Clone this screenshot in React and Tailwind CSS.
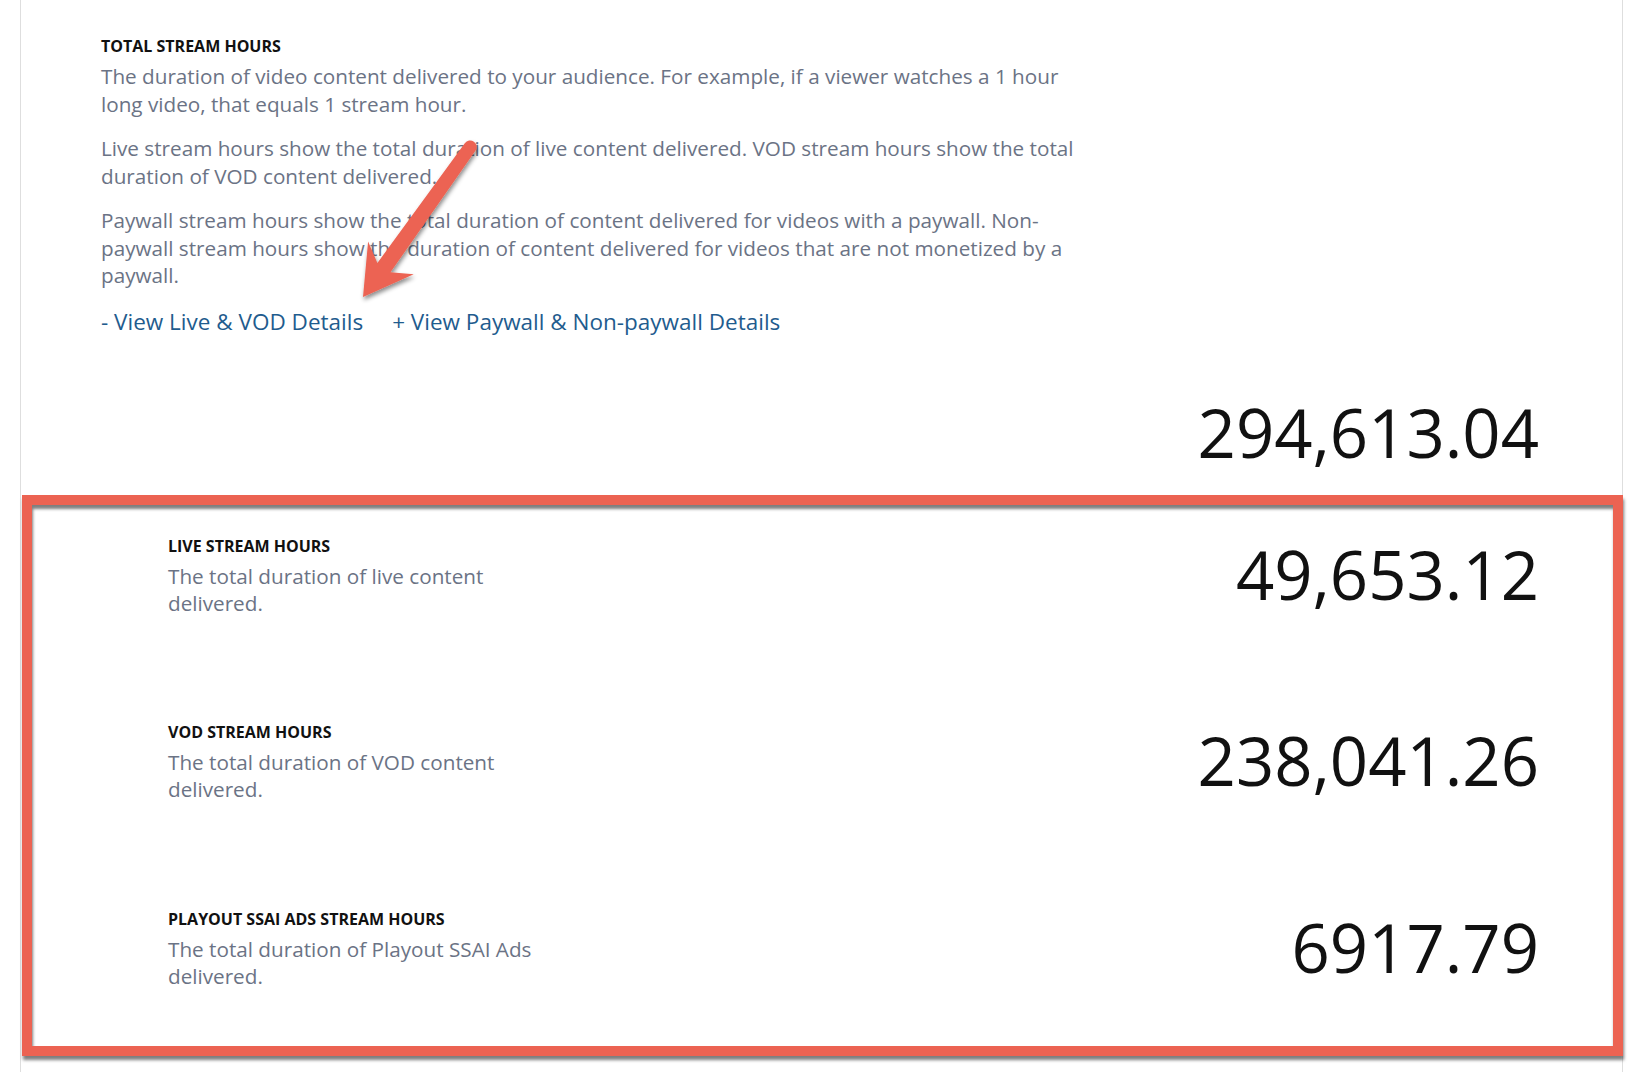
const rows = [
  {
    title: "Live Stream Hours",
    text: "The total duration of live content delivered.",
    value: "49,653.12",
  },
  {
    title: "VOD Stream Hours",
    text: "The total duration of VOD content delivered.",
    value: "238,041.26",
  },
  {
    title: "Playout SSAI Ads Stream Hours",
    text: "The total duration of Playout SSAI Ads delivered.",
    value: "6917.79",
  },
];

const MetricRow = ({ title, text, value }) => {
  return (
    <div className="flex items-start justify-between pl-[136px] pr-[74px]">
      <div className="w-[380px]">
        <h3 className="text-[16px] font-bold uppercase leading-[20px] text-[#111]">{title}</h3>
        <p className="mt-[7px] text-[20.7px] leading-[27.3px] text-[#6b7385]">{text}</p>
      </div>
      <div className="mt-[5px] text-[67px] leading-none text-[#111]">{value}</div>
    </div>
  );
};

const Arrow = () => {
  return (
    <svg
      className="pointer-events-none absolute left-[-21px] top-0"
      width="600"
      height="360"
      viewBox="0 0 600 360"
    >
      <defs>
        <filter id="arrow-shadow" x="-30%" y="-30%" width="160%" height="160%">
          <feDropShadow dx="1" dy="3" stdDeviation="2" floodColor="#000" floodOpacity="0.45" />
        </filter>
      </defs>
      <path
        d="M 363 297 L 413.7 274.2 L 390.5 272.3 L 475.4 150.8 A 6.5 6.5 0 0 0 464.8 143.2 L 377.4 263 L 368.1 241.6 Z"
        fill="#ec6352"
        filter="url(#arrow-shadow)"
      />
    </svg>
  );
};

export default function App() {
  return (
    <div className="min-h-screen bg-white pl-[20px] font-['Open_Sans',sans-serif]">
      <div className="relative min-h-[1072px] w-[1603px] border-x border-[#dedede] bg-white">
        <section className="pl-[80px] pr-[83px] pt-[36px]">
          <h2 className="text-[16px] font-bold uppercase leading-[20px] text-[#111]">
            Total Stream Hours
          </h2>
          <div className="max-w-[995px] text-[20.7px] leading-[27.5px] text-[#6b7385]">
            <p className="mt-[7px]">
              The duration of video content delivered to your audience. For example, if a viewer
              watches a 1 hour long video, that equals 1 stream hour.
            </p>
            <p className="mt-[17px]">
              Live stream hours show the total duration of live content delivered. VOD stream hours
              show the total duration of VOD content delivered.
            </p>
            <p className="mt-[17px]">
              Paywall stream hours show the total duration of content delivered for videos with a
              paywall. Non-paywall stream hours show the duration of content delivered for videos
              that are not monetized by a paywall.
            </p>
          </div>
          <div className="mt-[17px] flex gap-[29px] text-[22.5px] leading-[30px] text-[#1f5c8e]">
            <a href="#" className="hover:underline">- View Live &amp; VOD Details</a>
            <a href="#" className="hover:underline">+ View Paywall &amp; Non-paywall Details</a>
          </div>
          <div className="mt-[62px] text-right text-[67px] leading-none text-[#111]">
            294,613.04
          </div>
        </section>

        <div className="ml-px mr-[-1px] mt-[29px] flex flex-col gap-[105px] border-[10px] border-[#ec6352] bg-white pb-[56px] pt-[31px] shadow-[1px_4px_3px_rgba(0,0,0,0.5),inset_1px_4px_3px_rgba(0,0,0,0.5)]">
          {rows.map((row) => (
            <MetricRow key={row.title} {...row} />
          ))}
        </div>

        <Arrow />
      </div>
    </div>
  );
}
